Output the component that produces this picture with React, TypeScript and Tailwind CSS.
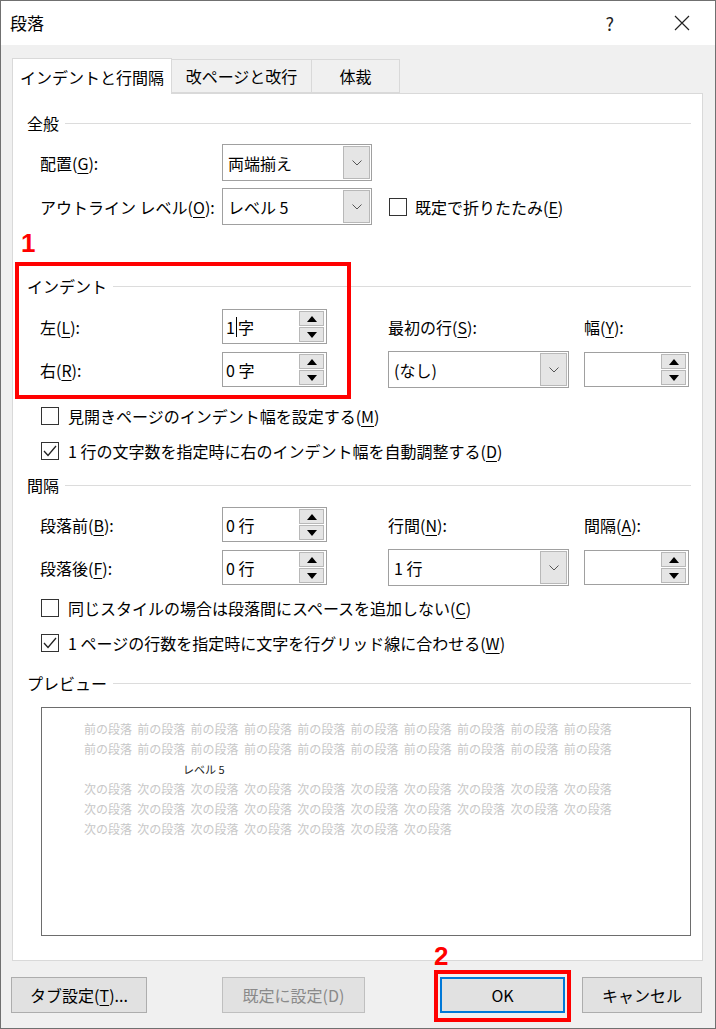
import React from "react";

const FONT = { fontFamily: '"Noto Sans CJK JP", "Noto Sans", sans-serif' };

function Chevron() {
  return (
    <svg width="10" height="6" viewBox="0 0 10 6">
      <path d="M0.5 0.5 L5 5 L9.5 0.5" fill="none" stroke="#555" strokeWidth="1" />
    </svg>
  );
}

function Select({ value, width }: { value: string; width: string }) {
  return (
    <div className={`${width} h-[37px] border border-[#a0a0a0] bg-white flex items-stretch`}>
      <div className="flex-1 flex items-center pl-[5px] text-[16px] text-black">{value}</div>
      <div className="w-[27px] m-[1px] bg-[#e5e5e5] border border-[#b8b8b8] flex items-center justify-center">
        <Chevron />
      </div>
    </div>
  );
}

function Spin({ value, caret }: { value?: string; caret?: boolean }) {
  return (
    <div className="w-[105px] h-[35px] border border-[#a0a0a0] bg-white flex items-stretch">
      <div className="flex-1 flex items-center pl-[3px] text-[16px] text-black">
        {caret ? (
          <>
            <span>1</span>
            <span className="inline-block w-[1px] h-[20px] bg-black mx-[1px]" />
            <span>字</span>
          </>
        ) : (
          value
        )}
      </div>
      <div className="w-[25px] my-[1px] mr-[2px] flex flex-col gap-[1px]">
        <div className="flex-1 bg-[#e5e5e5] border border-[#b8b8b8] flex items-center justify-center">
          <svg width="10" height="6" viewBox="0 0 10 6">
            <path d="M0 6 L5 0 L10 6 Z" fill="#000" />
          </svg>
        </div>
        <div className="flex-1 bg-[#e5e5e5] border border-[#b8b8b8] flex items-center justify-center">
          <svg width="10" height="6" viewBox="0 0 10 6">
            <path d="M0 0 L10 0 L5 6 Z" fill="#000" />
          </svg>
        </div>
      </div>
    </div>
  );
}

function Check({ checked }: { checked?: boolean }) {
  return (
    <div className="w-[18px] h-[18px] border border-[#333] bg-white flex items-center justify-center shrink-0">
      {checked && (
        <svg width="14" height="12" viewBox="0 0 14 12">
          <path d="M1 6 L5 10.5 L13 1" fill="none" stroke="#222" strokeWidth="1.3" />
        </svg>
      )}
    </div>
  );
}

function U({ c }: { c: string }) {
  return <span className="underline underline-offset-[3px] decoration-1">{c}</span>;
}

function Heading({ text, className }: { text: string; className: string }) {
  return (
    <div className={`flex items-center h-[20px] pl-[14px] pr-[11px] ${className}`}>
      <span className="text-[16px] text-black pr-[6px]">{text}</span>
      <div className="flex-1 h-[1px] bg-[#dcdcdc]" />
    </div>
  );
}

function CheckRow({ checked, children, className }: { checked?: boolean; children: React.ReactNode; className: string }) {
  return (
    <div className={`flex items-center h-[26px] pl-[28px] gap-[9px] text-[16px] text-black ${className}`}>
      <Check checked={checked} />
      <span>{children}</span>
    </div>
  );
}

function PreviewLine({ word, count, color }: { word: string; count: number; color: string }) {
  return (
    <div className={`flex h-[20px] items-center text-[12px] ${color}`}>
      {Array.from({ length: count }).map((_, i) => (
        <span key={i} className="w-[53.3px] shrink-0 whitespace-nowrap">{word}</span>
      ))}
    </div>
  );
}

export default function App() {
  return (
    <div className="relative w-[716px] h-[1029px] border border-[#707070] bg-[#f0f0f0] flex flex-col overflow-hidden" style={FONT}>
      {/* Title bar */}
      <div className="h-[44px] bg-white flex items-center pl-[9px] shrink-0">
        <span className="text-[17px] text-black">段落</span>
        <span className="ml-auto text-[18px] text-[#222] mr-[60px]">?</span>
        <svg width="16" height="16" viewBox="0 0 16 16" className="mr-[25px]">
          <path d="M1 1 L15 15 M15 1 L1 15" stroke="#222" strokeWidth="1.2" />
        </svg>
      </div>

      {/* Tabs */}
      <div className="flex items-end h-[48px] pl-[11px] shrink-0">
        <div className="h-[36px] w-[160px] bg-white border border-b-0 border-[#d9d9d9] flex items-center justify-center text-[16px] text-black relative z-10 -mb-[1px]">
          インデントと行間隔
        </div>
        <div className="h-[34px] w-[140px] border border-l-0 border-[#d9d9d9] flex items-center justify-center text-[16px] text-black">
          改ページと改行
        </div>
        <div className="h-[34px] w-[88px] border border-l-0 border-[#d9d9d9] flex items-center justify-center text-[16px] text-black">
          体裁
        </div>
      </div>

      {/* Tab page */}
      <div className="ml-[11px] mr-[12px] h-[868px] bg-white border border-[#d9d9d9] flex flex-col text-black">
        <Heading text="全般" className="mt-[19px]" />

        <div className="flex items-center mt-[11px] pl-[27px]">
          <span className="w-[182px] text-[16px]">配置(<U c="G" />):</span>
          <Select value="両端揃え" width="w-[150px]" />
        </div>
        <div className="flex items-center mt-[7px] pl-[27px]">
          <span className="w-[182px] text-[16px] whitespace-nowrap">アウトライン レベル(<U c="O" />):</span>
          <Select value="レベル 5" width="w-[150px]" />
          <div className="flex items-center gap-[8px] ml-[17px] text-[16px]">
            <Check />
            <span>既定で折りたたみ(<U c="E" />)</span>
          </div>
        </div>

        <Heading text="インデント" className="mt-[51px]" />

        <div className="flex items-center mt-[13px] pl-[27px]">
          <span className="w-[182px] text-[16px]">左(<U c="L" />):</span>
          <Spin caret />
          <span className="ml-[61px] w-[196px] text-[16px]">最初の行(<U c="S" />):</span>
          <span className="text-[16px]">幅(<U c="Y" />):</span>
        </div>
        <div className="flex items-center mt-[7px] pl-[27px]">
          <span className="w-[182px] text-[16px]">右(<U c="R" />):</span>
          <Spin value="0 字" />
          <div className="ml-[61px]">
            <Select value="(なし)" width="w-[181px]" />
          </div>
          <div className="ml-[15px]">
            <Spin />
          </div>
        </div>

        <CheckRow className="mt-[15px]">
          見開きページのインデント幅を設定する(<U c="M" />)
        </CheckRow>
        <CheckRow checked className="mt-[9px]">
          1 行の文字数を指定時に右のインデント幅を自動調整する(<U c="D" />)
        </CheckRow>

        <Heading text="間隔" className="mt-[11px]" />

        <div className="flex items-center mt-[12px] pl-[27px]">
          <span className="w-[182px] text-[16px]">段落前(<U c="B" />):</span>
          <Spin value="0 行" />
          <span className="ml-[61px] w-[196px] text-[16px]">行間(<U c="N" />):</span>
          <span className="text-[16px]">間隔(<U c="A" />):</span>
        </div>
        <div className="flex items-center mt-[7px] pl-[27px]">
          <span className="w-[182px] text-[16px]">段落後(<U c="F" />):</span>
          <Spin value="0 行" />
          <div className="ml-[61px]">
            <Select value="1 行" width="w-[181px]" />
          </div>
          <div className="ml-[15px]">
            <Spin />
          </div>
        </div>

        <CheckRow className="mt-[9px]">
          同じスタイルの場合は段落間にスペースを追加しない(<U c="C" />)
        </CheckRow>
        <CheckRow checked className="mt-[9px]">
          1 ページの行数を指定時に文字を行グリッド線に合わせる(<U c="W" />)
        </CheckRow>

        <Heading text="プレビュー" className="mt-[17px]" />

        <div className="ml-[28px] mr-[11px] mt-[14px] h-[229px] border border-[#6d6d6d] bg-white pt-[11px] pl-[42px]">
          <PreviewLine word="前の段落" count={10} color="text-[#c8c8c8]" />
          <PreviewLine word="前の段落" count={10} color="text-[#c8c8c8]" />
          <div className="h-[20px] flex items-center pl-[99px] text-[11px] text-[#222]">レベル 5</div>
          <PreviewLine word="次の段落" count={10} color="text-[#c8c8c8]" />
          <PreviewLine word="次の段落" count={10} color="text-[#c8c8c8]" />
          <PreviewLine word="次の段落" count={7} color="text-[#c8c8c8]" />
        </div>
      </div>

      {/* Buttons */}
      <div className="flex items-center mt-[16px] pl-[10px] text-[16px]">
        <div className="w-[136px] h-[36px] bg-[#e1e1e1] border border-[#adadad] flex items-center justify-center text-black">
          タブ設定(<U c="T" />)...
        </div>
        <div className="ml-[75px] w-[143px] h-[36px] bg-[#e1e1e1] border border-[#bfbfbf] flex items-center justify-center text-[#8a8a8a]">
          既定に設定(D)
        </div>
        <div className="ml-[75px] w-[125px] h-[36px] bg-[#e1e1e1] border-2 border-[#0078d7] flex items-center justify-center text-black">
          OK
        </div>
        <div className="ml-[17px] w-[120px] h-[36px] bg-[#e1e1e1] border border-[#adadad] flex items-center justify-center text-black">
          キャンセル
        </div>
      </div>

      {/* Annotations */}
      <div className="absolute left-[20px] top-[229px] text-[26px] font-bold text-[#ff0000] leading-none" style={{ fontFamily: '"Liberation Sans", sans-serif' }}>1</div>
      <div className="absolute left-[14px] top-[261px] w-[336px] h-[137px] border-[4px] border-[#ff0000]" />
      <div className="absolute left-[433px] top-[942px] text-[26px] font-bold text-[#ff0000] leading-none" style={{ fontFamily: '"Liberation Sans", sans-serif' }}>2</div>
      <div className="absolute left-[433px] top-[969px] w-[137px] h-[52px] border-[4px] border-[#ff0000]" />
    </div>
  );
}
